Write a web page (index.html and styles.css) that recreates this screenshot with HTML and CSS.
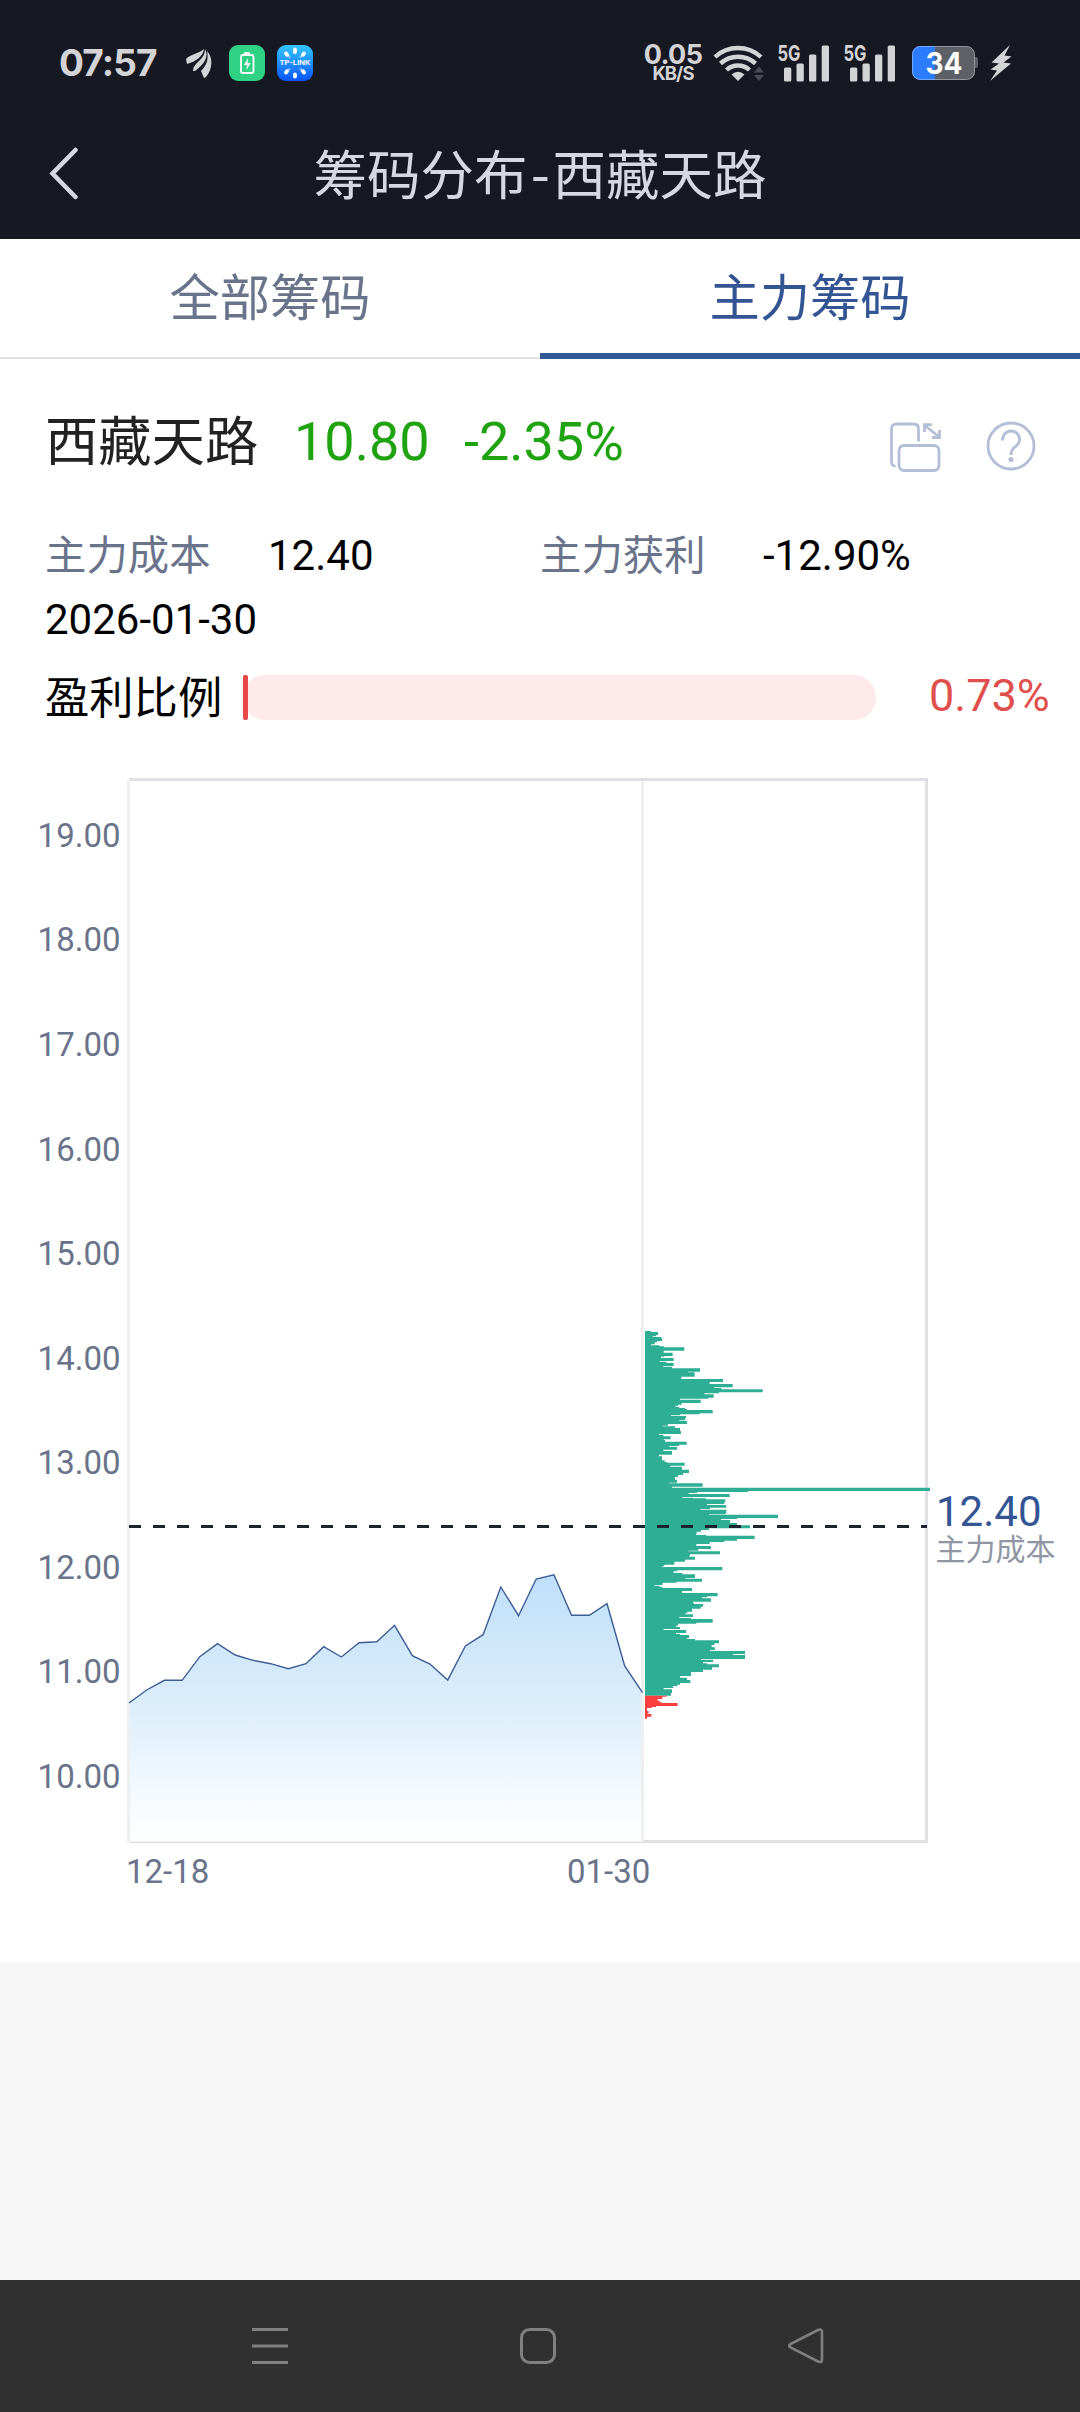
FILE: index.html
```html
<!DOCTYPE html>
<html lang="zh-CN">
<head>
<meta charset="utf-8">
<title>筹码分布-西藏天路</title>
<link rel="stylesheet" href="styles.css">
</head>
<body>
<div class="phone">
  <div class="statusbar">
    <span class="clock">07:57</span>
    <svg class="ic-wing" width="28" height="32" viewBox="0 0 28 32">
      <path fill="#d4d4d6" d="M1 12C6 7 13 7 19 2C18 9 12 14 2 17ZM8 24C8 20 10 18 13 15C17 11 20 8 20 2C24 9 20 17 10 24ZM19 31L16 24C21 19 24 13 22 4C28 10 28 22 21 30Z"/>
    </svg>
    <svg class="ic-app" width="36" height="36" viewBox="0 0 36 36">
      <rect width="36" height="36" rx="9" fill="#2fd184"/>
      <rect x="15" y="7" width="6" height="3" rx="1" fill="#fff"/>
      <rect x="12" y="10" width="12.500" height="18" rx="2" fill="none" stroke="#fff" stroke-width="1.800"/>
      <path fill="#fff" d="M19 13L15 20H18L17.500 25L21.500 18H18.500Z"/>
    </svg>
    <svg class="ic-app" width="36" height="36" viewBox="0 0 36 36">
      <defs><linearGradient id="tp" x1="0" y1="0" x2="0" y2="1"><stop offset="0" stop-color="#33c7ff"/><stop offset="1" stop-color="#0a55ff"/></linearGradient></defs>
      <rect width="36" height="36" rx="9" fill="url(#tp)"/>
      <g stroke="#fff" stroke-width="3.800" stroke-linecap="round"><path d="M18 4.500V7M9 8.500L10 9.700M27 8.500L26 9.700M9 27.500L10 26.300M27 27.500L26 26.300M18 31.500V29.500"/></g>
      <g stroke="#fff" stroke-opacity=".4" stroke-width="2.500" stroke-linecap="round"><path d="M10 9.700L12.500 12M26 9.700L23.500 12M10 26.300L12.500 24M26 26.300L23.500 24"/></g>
      <text x="18" y="20.300" text-anchor="middle" class="tp" textLength="31" lengthAdjust="spacingAndGlyphs">TP-LINK</text>
    </svg>
    <div class="speed"><b>0.05</b><i>KB/S</i></div>
    <svg class="ic-wifi" width="52" height="38" viewBox="0 0 52 38">
      <g fill="none" stroke="#d4d4d6" stroke-width="4.400"><path d="M2 13A34 34 0 0 1 48 13"/><path d="M7.500 19.500A26 26 0 0 1 42.500 19.500"/><path d="M13.500 26A17 17 0 0 1 36.500 26"/></g>
      <path fill="#d4d4d6" d="M25 37L18.500 30.500Q25 25 31.500 30.500Z"/>
      <path fill="#4a4c54" d="M41 28.500L46 22.500L51 28.500ZM41 31L46 37L51 31Z"/>
    </svg>
    <svg class="ic-signal" width="51" height="38" viewBox="0 0 51 38">
      <text x="-.5" y="16.500" class="net" textLength="23" lengthAdjust="spacingAndGlyphs">5G</text>
      <g fill="#d4d4d6"><rect x="6" y="23.500" width="7.300" height="14" rx="1.500"/><rect x="18.500" y="19.500" width="7.300" height="18" rx="1.500"/><rect x="31" y="10.500" width="7.300" height="27" rx="1.500"/><rect x="43.700" y="1.500" width="7.300" height="36" rx="1.500"/></g>
    </svg>
    <svg class="ic-signal second" width="51" height="38" viewBox="0 0 51 38">
      <text x="-.5" y="16.500" class="net" textLength="23" lengthAdjust="spacingAndGlyphs">5G</text>
      <g fill="#d4d4d6"><rect x="6" y="23.500" width="7.300" height="14" rx="1.500"/><rect x="18.500" y="19.500" width="7.300" height="18" rx="1.500"/><rect x="31" y="10.500" width="7.300" height="27" rx="1.500"/><rect x="43.700" y="1.500" width="7.300" height="36" rx="1.500"/></g>
    </svg>
    <svg class="ic-battery" width="66" height="34" viewBox="0 0 66 34">
      <defs><clipPath id="batt"><rect width="63" height="34" rx="8.500"/></clipPath></defs>
      <path fill="#5d6067" d="M62 11H64Q66 11 66 13V20Q66 22 64 22H62Z"/>
      <g clip-path="url(#batt)"><rect width="63" height="34" fill="#5d6067"/><rect width="23" height="34" fill="#2b7cff"/></g>
      <rect x=".5" y=".5" width="62" height="33" rx="8" fill="none" stroke="#fff" stroke-opacity=".35"/>
      <text x="32" y="28" text-anchor="middle" class="level" textLength="37" lengthAdjust="spacingAndGlyphs">34</text>
    </svg>
    <svg class="ic-bolt" width="22" height="36" viewBox="0 0 22 36">
      <path fill="#d4d4d6" d="M20 0L1.500 17.500L9 18.500L.5 24.500L7 25.500L0 36L21 18.500L13.500 17.500L21.500 11.500L14.500 10.500Z"/>
    </svg>
  </div>

  <header class="titlebar">
    <svg class="back" width="30" height="54" viewBox="0 0 30 54"><path d="M26.500 3L3.500 26.500L26.500 50" fill="none" stroke="#d5d8e2" stroke-width="4.500" stroke-linecap="round"/></svg>
    <h1>筹码分布<span class="dash">-</span>西藏天路</h1>
  </header>

  <nav class="tabs">
    <a class="tab">全部筹码</a>
    <a class="tab active">主力筹码</a>
  </nav>

  <section class="quote">
    <span class="name">西藏天路</span>
    <span class="price">10.80</span>
    <span class="change">-2.35%</span>
    <svg class="ic-rotate" width="52" height="52" viewBox="0 0 52 52" fill="none" stroke="#b4bed6" stroke-width="2.800">
      <path d="M6.500 45.500Q2.500 44.500 2.500 41V8Q2.500 3 7.500 3H24.500Q29.500 3 29.500 8V20.500"/>
      <rect x="10" y="24.500" width="40" height="25" rx="5"/>
      <path d="M36 4.500L49.500 15.500M35.500 11V3.700H43M50.500 9V16.500H43"/>
    </svg>
    <svg class="ic-help" width="50" height="50" viewBox="0 0 50 50" fill="none" stroke="#b4bed6">
      <circle cx="25" cy="25" r="23" stroke-width="2.800"/>
      <path d="M16.800 19.500A8.400 8.400 0 1 1 29.500 25.500Q25 28.300 25 34" stroke-width="3"/>
      <circle cx="25" cy="38.500" r="2.600" fill="#b4bed6" stroke="none"/>
    </svg>
  </section>

  <section class="metrics">
    <span class="label">主力成本</span><span class="value">12.40</span>
    <span class="label">主力获利</span><span class="value">-12.90%</span>
  </section>
  <div class="date">2026-01-30</div>
  <section class="ratio">
    <span class="ratio-label">盈利比例</span>
    <div class="meter"><div class="fill" style="width:0.73%"></div></div>
    <span class="percent">0.73%</span>
  </section>

  <svg class="chart" width="1080" height="1219" viewBox="0 743 1080 1219">
    <defs><linearGradient id="area" gradientUnits="userSpaceOnUse" x1="0" y1="1574" x2="0" y2="1841"><stop offset="0" stop-color="#bfdff9"/><stop offset=".5" stop-color="#dceefb"/><stop offset=".8" stop-color="#f3f9fe"/><stop offset="1" stop-color="#fff"/></linearGradient></defs>
    <!-- plot frame -->
    <rect x="129" y="778" width="799" height="3" fill="#dfe0e4"/>
    <rect x="925" y="778" width="3" height="1065" fill="#dfe0e6"/>
    <rect x="644" y="1840" width="284" height="3" fill="#dfe0e6"/>
    <rect x="129" y="1841.500" width="515" height="1.500" fill="#dfe0e4"/>
    <!-- closing price -->
    <path fill="url(#area)" d="M129 1841V1703L146.700 1690L164.400 1680.300H182.100L199.800 1656.700L217.500 1643.700L235.200 1655L252.900 1660.300L270.600 1663.700L288.300 1668.700L306 1663.700L323.700 1646.700L341.400 1657L359.100 1642.700L376.800 1641.700L394.600 1625.300L412.300 1655.700L430 1664L447.700 1680L465.400 1646L483.100 1634.700L500.800 1587L518.500 1615.700L536.200 1579L553.900 1574.700L571.600 1615.300H589.300L607 1603.700L624.700 1666L642.500 1692.700V1841Z"/>
    <rect x="127" y="780" width="3" height="1062" fill="#eeeff0"/>
    <rect x="641" y="781" width="3" height="1061" fill="#eeeff0"/>
    <path fill="none" stroke="#3c5d95" stroke-width="1.400" d="M129 1703L146.700 1690L164.400 1680.300H182.100L199.800 1656.700L217.500 1643.700L235.200 1655L252.900 1660.300L270.600 1663.700L288.300 1668.700L306 1663.700L323.700 1646.700L341.400 1657L359.100 1642.700L376.800 1641.700L394.600 1625.300L412.300 1655.700L430 1664L447.700 1680L465.400 1646L483.100 1634.700L500.800 1587L518.500 1615.700L536.200 1579L553.900 1574.700L571.600 1615.300H589.300L607 1603.700L624.700 1666L642.500 1692.700"/>
    <!-- chip distribution -->
    <path fill="#2eae94" transform="translate(620 1310) scale(.33333)" d="M75 63H93V66H114V75H108V79H98V81H123V84H126V93H111V97H104V103H93V106H119V109H132V112H193V122H131V128H158V138H133V140H123V144H161V153H119V155H140V159H161V168H130V170H156V175H240V185H204V187H224V200H184V207H309V216H269V222H338V232H283V234H304V238H428V247H297V250H253V253H281V263H265V266H180V269H242V279H185V284H174V287H166V290H177V294H195V297H201V300H278V310H239V313H180V316H153V318H198V325H195V331H178V333H201V342H144V347H127V349H165V354H180V363H183V372H117V375H130V379H152V388H131V390H135V395H200V404H177V408H148V411H171V419H130V423H156V434H117V439H126V451H134V456H141V458H194V467H151V470H186V479H207V489H189V495H174V501H165V510H171V518H146V520H248V530H156V533H930V543H384V546H231V549H206V552H329V561H187V563H219V565H258V568H316V576H313V582H261V585H318V593H270V597H241V599H319V609H317V613H75Z"/>
    <path fill="#2eae94" transform="translate(620 1510) scale(.33333)" d="M75 12H267V14H474V24H351V27H303V30H330V39H351V46H390V55H267V60H243V65H230V72H228V75H258V77H404V87H351V92H313V96H269V102H229V108H273V117H235V122H205V124H300V133H210V137H208V140H225V149H195V155H163V164H133V168H127V171H307V181H172V184H161V189H187V193H225V204H196V206H246V215H170V218H128V225H103V227H118V230H127V234H216V243H186V249H293V259H262V262H246V265H273V275H219V278H222V282H249V290H242V296H216V305H202V309H197V313H219V321H178V324H213V327H278V338H229V341H174V347H168V351H180V357H131V360H198V369H168V372H180V375H207V384H201V387H225V391H297V400H283V405H275V412H285V420H270V423H375V432H339V435H375V447H243V449H279V456H249V460H262V463H297V472H276V479H249V486H213V498H180V503H201V510H211V519H180V524H172V528H159V534H131V538H156V549H153V557H75Z"/>
    <path fill="#fb3e3e" transform="translate(620 1510) scale(.33333)" d="M75 557H140V560H127V567H113V572H119V577H125V579H173V588H108V591H95V594H81V603H86V609H83V612H94V620H81V626H75Z"/>
    <path stroke="#1c242e" stroke-width="3" stroke-dasharray="12 12" d="M129 1526.500H927"/>
    <g class="axis" text-anchor="end">
      <text x="120.500" y="847">19.00</text><text x="120.500" y="951">18.00</text><text x="120.500" y="1056">17.00</text><text x="120.500" y="1161">16.00</text><text x="120.500" y="1265">15.00</text><text x="120.500" y="1370">14.00</text><text x="120.500" y="1474">13.00</text><text x="120.500" y="1579">12.00</text><text x="120.500" y="1683">11.00</text><text x="120.500" y="1788">10.00</text>
    </g>
    <g class="axis"><text x="126" y="1883">12-18</text><text x="567" y="1883">01-30</text></g>
    <text class="cost" x="936" y="1526">12.40</text>
    <text class="cost-label" x="935.500" y="1559.500">主力成本</text>
  </svg>

  <div class="filler"></div>

  <footer class="navbar">
    <svg width="36" height="36" viewBox="0 0 36 36" fill="#808080"><path d="M0 0H36V3H0ZM0 16.500H36V19.500H0ZM0 33H36V36H0Z"/></svg>
    <svg width="36" height="36" viewBox="0 0 36 36" fill="none" stroke="#808080" stroke-width="3"><rect x="1.500" y="1.500" width="33" height="33" rx="8"/></svg>
    <svg width="36" height="36" viewBox="0 0 36 36" fill="none" stroke="#808080" stroke-width="2.600"><path d="M2.500 16L30.500 1.800Q34 .7 34 4V31.500Q34 35 30.500 33.700L2.500 19.500Q0 17.700 2.500 16Z"/></svg>
  </footer>
</div>
</body>
</html>
```
FILE: styles.css
```css
* { box-sizing: border-box; }
body {
  margin: 0;
  background: #fff;
  font-family: Roboto, "Noto Sans CJK SC", sans-serif;
  color: #000;
}
svg { display: block; flex: none; }
.phone {
  display: flex;
  flex-direction: column;
  width: 1080px;
  height: 2412px;
  overflow: hidden;
}

/* system status bar */
.statusbar {
  display: flex;
  align-items: center;
  height: 110px;
  padding: 16px 0 0 59px;
  background: #171922;
  color: #d4d4d6;
  font-family: Inter, sans-serif;
}
.clock { width: 126px; padding-bottom: 1px; font-size: 37px; font-weight: 700; line-height: 40px; letter-spacing: -0.9px; }
.ic-wing { margin-right: 16px; }
.ic-app { margin-right: 12px; }
.tp { font: 700 6.5px Inter, sans-serif; fill: #fff; }
.speed {
  display: flex;
  flex-direction: column;
  align-items: center;
  width: 60px;
  margin-left: 318px;
  white-space: nowrap;
}
.speed b { font-size: 27px; font-weight: 700; line-height: 21px; letter-spacing: -0.6px; }
.speed i { font-size: 18.5px; font-weight: 700; font-style: normal; line-height: 17px; letter-spacing: -0.9px; }
.ic-wifi { margin-left: 10px; }
.ic-signal { margin-left: 13px; overflow: visible; }
.ic-signal.second { margin-left: 15px; }
.net { font: 700 22px Inter, sans-serif; fill: #d4d4d6; }
.ic-battery { margin-left: 17px; }
.level { font: 700 30px Inter, sans-serif; fill: #fff; }
.ic-bolt { margin-left: 12px; }

/* page title */
.titlebar {
  display: grid;
  grid-template-columns: 120px 1fr 120px;
  align-items: center;
  height: 129px;
  background: #171922;
  color: #d5d8e2;
}
.back { margin: 0 0 2px 49px; }
.titlebar h1 { margin: 0; padding-top: 4px; font-size: 53.5px; font-weight: 400; line-height: 125px; text-align: center; }
.dash { display: inline-block; width: 25px; text-align: center; transform: scaleX(1.1); }

.tabs { display: grid; grid-template-columns: 1fr 1fr; height: 120px; }
.tab {
  height: 120px;
  border-bottom: 2px solid #dfdfe3;
  font-size: 50.3px;
  line-height: 119px;
  text-align: center;
  color: #69738a;
}
.tab.active { border-bottom: 6px solid #345997; color: #345593; }

/* quote summary */
.quote { display: flex; align-items: center; height: 164px; padding: 0 44px 0 45px; font-size: 54px; line-height: 80px; }
.name { width: 249px; padding-top: 3px; font-size: 53.3px; color: #222; }
.price { width: 170px; padding-top: 1px; color: #1fa310; }
.change { flex: 1; padding-top: 1px; color: #1fa310; }
.ic-rotate { margin: 12px 45px 0 0; }
.ic-help { margin-top: 10px; }

.metrics {
  display: grid;
  grid-template-columns: 223px 272px 223px 1fr;
  height: 64px;
  padding-left: 45px;
  font-size: 42px;
  line-height: 66px;
}
.label { font-size: 41.4px; line-height: 67px; color: #69738a; }
.date { height: 64px; padding-left: 45px; font-size: 42px; line-height: 65px; }
.ratio { display: flex; align-items: center; height: 92px; padding-left: 45px; font-size: 45px; line-height: 88px; }
.ratio-label { width: 198px; padding-top: 4px; font-size: 44.3px; }
.meter { width: 633px; height: 45px; border-radius: 22px; background: #feeaea; }
.fill { min-width: 5px; height: 45px; border-radius: 2px; background: #e8474a; }
.percent { margin-left: 53px; padding-bottom: 3px; color: #e04f4c; }

/* chart */
.axis { font-size: 33px; fill: #69738a; }
.cost { font-size: 42px; fill: #345593; }
.cost-label { font-size: 30px; fill: #8f96a4; }

.filler { flex: 1; background: #f7f7f7; }

.navbar {
  display: flex;
  gap: 232px;
  height: 132px;
  padding: 48px 0 0 252px;
  background: #303030;
}
```
